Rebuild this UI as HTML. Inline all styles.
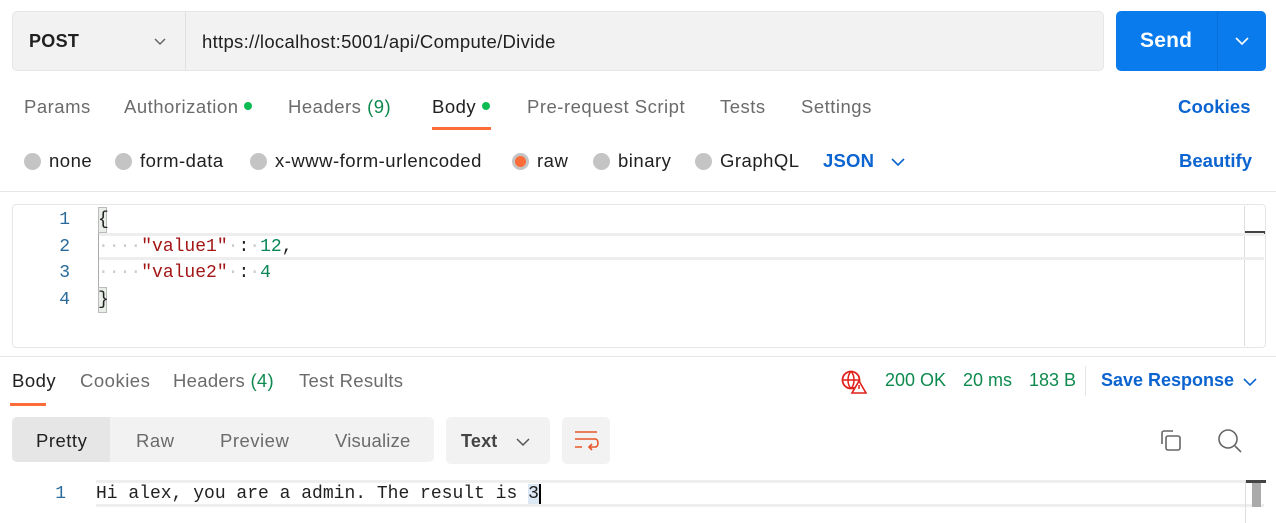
<!DOCTYPE html>
<html><head><meta charset="utf-8"><style>
*{margin:0;padding:0;box-sizing:border-box}
body{width:1276px;height:523px;background:#fff;position:relative;overflow:hidden;font-family:"Liberation Sans",sans-serif;color:#212121;letter-spacing:0.5px}
.a{position:absolute;white-space:nowrap}
.t{font-size:18.5px;color:#6b6b6b;top:96px}
.g{color:#0f8a4f}
.dot{display:inline-block;width:8px;height:8px;border-radius:50%;background:#0cbb52;margin-left:6px;vertical-align:3px}
.r{top:150px;font-size:18.5px;color:#212121}
.rc{display:inline-block;width:17px;height:17px;border-radius:50%;background:#c4c4c4;vertical-align:-3px;margin-right:8px}
.mono{font-family:"Liberation Mono",monospace;letter-spacing:0}
.ln{font-size:18px;color:#2a6a9a;width:20px;text-align:right}
.code{font-size:18px}
.rt{font-size:18.5px;color:#6b6b6b;top:370px}
</style></head><body>
<div class="a" style="left:12px;top:11px;width:1092px;height:60px;background:#f2f2f2;border:1px solid #e6e6e6;border-radius:5px"></div>
<div class="a" style="left:185px;top:12px;width:1px;height:58px;background:#e0e0e0"></div>
<div class="a" style="left:29px;top:31px;font-size:18px;font-weight:bold;letter-spacing:0.3px">POST</div>
<svg class="a" style="left:153px;top:37px" width="14" height="10"><path d="M2 2l5 5 5-5" fill="none" stroke="#666" stroke-width="1.5"/></svg>
<div class="a" style="left:202px;top:31px;font-size:18.5px;letter-spacing:0.3px">https://localhost:5001/api/Compute/Divide</div>
<div class="a" style="left:1116px;top:11px;width:150px;height:60px;background:#097bed;border-radius:5px"></div>
<div class="a" style="left:1217px;top:11px;width:1px;height:60px;background:#0a6fd6"></div>
<div class="a" style="left:1140px;top:29px;font-size:21px;font-weight:bold;color:#fff;letter-spacing:0.2px">Send</div>
<svg class="a" style="left:1234px;top:36px" width="16" height="10"><path d="M2 2l6 6 6-6" fill="none" stroke="#fff" stroke-width="1.6"/></svg>
<div class="a t" style="left:24px">Params</div>
<div class="a t" style="left:124px">Authorization<span class="dot"></span></div>
<div class="a t" style="left:288px">Headers <span class="g">(9)</span></div>
<div class="a t" style="left:432px;color:#212121">Body<span class="dot"></span></div>
<div class="a" style="left:432px;top:127px;width:59px;height:3px;background:#ff6c37"></div>
<div class="a t" style="left:527px">Pre-request Script</div>
<div class="a t" style="left:720px">Tests</div>
<div class="a t" style="left:801px">Settings</div>
<div class="a t" style="left:1178px;color:#0b64d0;font-weight:bold;letter-spacing:0.1px">Cookies</div>
<div class="a r" style="left:24px"><span class="rc"></span>none</div>
<div class="a r" style="left:115px"><span class="rc"></span>form-data</div>
<div class="a r" style="left:250px"><span class="rc"></span>x-www-form-urlencoded</div>
<div class="a r" style="left:512px"><span class="rc" style="background:#ff6c37;border:3px solid #c4c4c4"></span>raw</div>
<div class="a r" style="left:593px"><span class="rc"></span>binary</div>
<div class="a r" style="left:695px"><span class="rc"></span>GraphQL</div>
<div class="a r" style="left:823px;color:#0b64d0;font-weight:bold;letter-spacing:0.2px">JSON</div>
<svg class="a" style="left:890px;top:157px" width="16" height="10"><path d="M2 2l6 6 6-6" fill="none" stroke="#0b64d0" stroke-width="1.6"/></svg>
<div class="a r" style="left:1179px;color:#0b64d0;font-weight:bold;letter-spacing:0">Beautify</div>
<div class="a" style="left:0;top:191px;width:1276px;height:1px;background:#e6e6e6"></div>
<div class="a" style="left:12px;top:204px;width:1254px;height:144px;border:1px solid #e6e6e6;border-radius:4px"></div>
<div class="a" style="left:1244px;top:206px;width:1px;height:140px;background:#ddd"></div>
<div class="a" style="left:1245px;top:231px;width:20px;height:3px;background:#444"></div>
<div class="a" style="left:98px;top:233px;width:1166px;height:27px;border-top:3px solid #eee;border-bottom:3px solid #eee"></div>
<div class="a" style="left:98px;top:233px;width:1px;height:54px;background:#aaa"></div>
<div class="a" style="left:98px;top:207px;width:9px;height:26px;background:#eaeee8;border:1px solid #bbb"></div>
<div class="a" style="left:98px;top:287px;width:9px;height:26px;background:#eaeee8;border:1px solid #bbb"></div>
<div class="a mono ln" style="left:50px;top:210px">1</div>
<div class="a mono ln" style="left:50px;top:237px">2</div>
<div class="a mono ln" style="left:50px;top:263px">3</div>
<div class="a mono ln" style="left:50px;top:290px">4</div>
<div class="a mono code" style="left:98px;top:210px">{</div>
<div class="a mono code" style="left:98px;top:237px"><span style="color:#ccc">····</span><span style="color:#a31515">"value1"</span><span style="color:#ccc">·</span>:<span style="color:#ccc">·</span><span style="color:#098658">12</span>,</div>
<div class="a mono code" style="left:98px;top:263px"><span style="color:#ccc">····</span><span style="color:#a31515">"value2"</span><span style="color:#ccc">·</span>:<span style="color:#ccc">·</span><span style="color:#098658">4</span></div>
<div class="a mono code" style="left:98px;top:290px">}</div>
<div class="a" style="left:0;top:356px;width:1276px;height:1px;background:#e6e6e6"></div>
<div class="a rt" style="left:12px;color:#212121">Body</div>
<div class="a" style="left:10px;top:403px;width:36px;height:3px;background:#ff6c37"></div>
<div class="a rt" style="left:80px">Cookies</div>
<div class="a rt" style="left:173px;letter-spacing:0.3px">Headers <span class="g">(4)</span></div>
<div class="a rt" style="left:299px;letter-spacing:0.3px">Test Results</div>
<svg class="a" style="left:841px;top:370px" width="26" height="24"><circle cx="10" cy="10" r="8.5" fill="none" stroke="#e0201a" stroke-width="1.8"/><path d="M1.5 10h17M10 1.5c-4 4-4 13 0 17M10 1.5c4 4 4 13 0 17" fill="none" stroke="#e0201a" stroke-width="1.5"/><path d="M18 11l7 12h-14z" fill="#fff" stroke="#e0201a" stroke-width="1.6"/><path d="M18 15v4" stroke="#e0201a" stroke-width="1.5"/></svg>
<div class="a rt" style="left:885px;color:#0f8a4f;letter-spacing:0;font-size:18px">200 OK</div>
<div class="a rt" style="left:963px;color:#0f8a4f;letter-spacing:0;font-size:18px">20 ms</div>
<div class="a rt" style="left:1029px;color:#0f8a4f;letter-spacing:0;font-size:18px">183 B</div>
<div class="a" style="left:1085px;top:366px;width:1px;height:30px;background:#e6e6e6"></div>
<div class="a rt" style="left:1101px;color:#0b64d0;font-weight:bold;letter-spacing:0;font-size:18px">Save Response</div>
<svg class="a" style="left:1242px;top:377px" width="16" height="10"><path d="M2 2l6 6 6-6" fill="none" stroke="#0b64d0" stroke-width="1.6"/></svg>
<div class="a" style="left:12px;top:417px;width:422px;height:45px;background:#f2f2f2;border-radius:5px"></div>
<div class="a" style="left:12px;top:417px;width:98px;height:45px;background:#e6e6e6;border-radius:5px 0 0 5px"></div>
<div class="a" style="left:36px;top:430px;font-size:18.5px">Pretty</div>
<div class="a" style="left:136px;top:430px;font-size:18.5px;color:#6b6b6b">Raw</div>
<div class="a" style="left:220px;top:430px;font-size:18.5px;color:#6b6b6b">Preview</div>
<div class="a" style="left:335px;top:430px;font-size:18.5px;color:#6b6b6b;letter-spacing:0.2px">Visualize</div>
<div class="a" style="left:446px;top:417px;width:104px;height:47px;background:#f2f2f2;border-radius:5px"></div>
<div class="a" style="left:461px;top:431px;font-size:18px;font-weight:bold;color:#444;letter-spacing:0.2px">Text</div>
<svg class="a" style="left:515px;top:437px" width="16" height="10"><path d="M2 2l6 6 6-6" fill="none" stroke="#555" stroke-width="1.5"/></svg>
<div class="a" style="left:562px;top:417px;width:48px;height:47px;background:#f2f2f2;border-radius:5px"></div>
<svg class="a" style="left:574px;top:430px" width="26" height="22"><path d="M1 2h22M1 9h20c4 0 4 8 0 8h-6M18 14l-3 3 3 3M1 17h7" fill="none" stroke="#e8572a" stroke-width="1.6"/></svg>
<svg class="a" style="left:1158px;top:428px" width="26" height="26"><path d="M4 16V5a2 2 0 0 1 2-2h9" fill="none" stroke="#666" stroke-width="1.6"/><rect x="8" y="8" width="14" height="14" rx="2" fill="none" stroke="#666" stroke-width="1.6"/></svg>
<svg class="a" style="left:1217px;top:428px" width="28" height="26"><circle cx="11" cy="11" r="9" fill="none" stroke="#666" stroke-width="1.6"/><path d="M18 18l6 6" stroke="#666" stroke-width="1.6"/></svg>
<div class="a" style="left:96px;top:480px;width:1168px;height:27px;border-top:3px solid #eee;border-bottom:3px solid #eee"></div>
<div class="a" style="left:1246px;top:480px;width:20px;height:3px;background:#444"></div>
<div class="a" style="left:1252px;top:483px;width:9px;height:24px;background:#aaa"></div>
<div class="a" style="left:1245px;top:480px;width:1px;height:43px;background:#ddd"></div>
<div class="a mono ln" style="left:46px;top:484px">1</div>
<div class="a mono code" style="left:96px;top:484px">Hi alex, you are a admin. The result is <span style="background:#dde8f5;border-right:2px solid #000">3</span></div>
</body></html>
